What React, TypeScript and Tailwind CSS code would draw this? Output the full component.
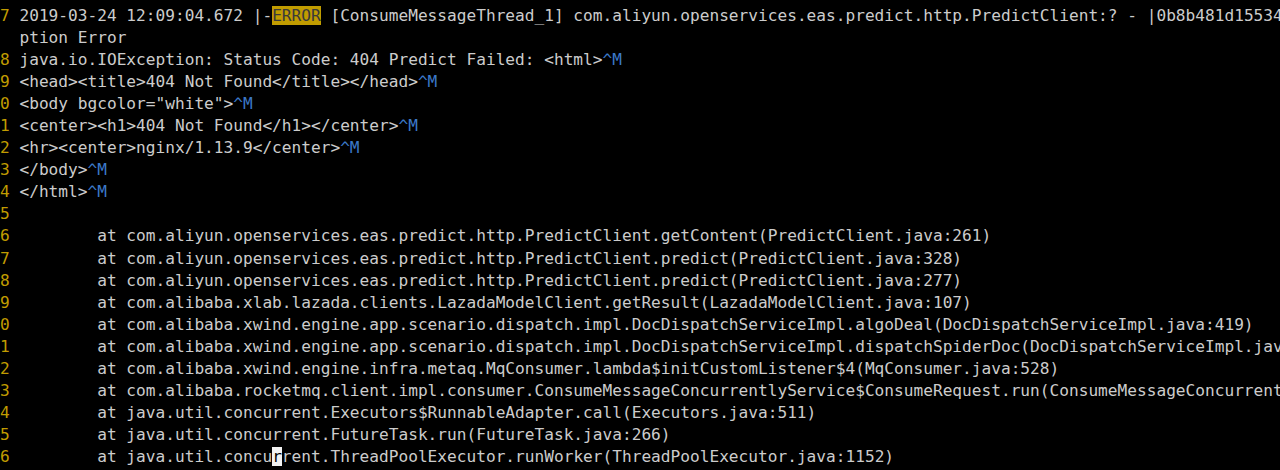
import React from 'react'

type Line = { n?: string; text?: string; cr?: boolean; node?: React.ReactNode }

const T = '        '

const lines: Line[] = [
  {
    n: '17',
    node: (
      <>
        2019-03-24 12:09:04.672 |-
        <span className="bg-[#c19c00] text-[#3a3a3a]">ERROR</span> [ConsumeMessageThread_1]
        com.aliyun.openservices.eas.predict.http.PredictClient:? - |0b8b481d15534628371461005e4f9a|Predict Exce
      </>
    ),
  },
  { text: 'ption Error' },
  { n: '18', text: 'java.io.IOException: Status Code: 404 Predict Failed: <html>', cr: true },
  { n: '19', text: '<head><title>404 Not Found</title></head>', cr: true },
  { n: '20', text: '<body bgcolor="white">', cr: true },
  { n: '21', text: '<center><h1>404 Not Found</h1></center>', cr: true },
  { n: '22', text: '<hr><center>nginx/1.13.9</center>', cr: true },
  { n: '23', text: '</body>', cr: true },
  { n: '24', text: '</html>', cr: true },
  { n: '25', text: '' },
  { n: '26', text: T + 'at com.aliyun.openservices.eas.predict.http.PredictClient.getContent(PredictClient.java:261)' },
  { n: '27', text: T + 'at com.aliyun.openservices.eas.predict.http.PredictClient.predict(PredictClient.java:328)' },
  { n: '28', text: T + 'at com.aliyun.openservices.eas.predict.http.PredictClient.predict(PredictClient.java:277)' },
  { n: '29', text: T + 'at com.alibaba.xlab.lazada.clients.LazadaModelClient.getResult(LazadaModelClient.java:107)' },
  { n: '30', text: T + 'at com.alibaba.xwind.engine.app.scenario.dispatch.impl.DocDispatchServiceImpl.algoDeal(DocDispatchServiceImpl.java:419)' },
  { n: '31', text: T + 'at com.alibaba.xwind.engine.app.scenario.dispatch.impl.DocDispatchServiceImpl.dispatchSpiderDoc(DocDispatchServiceImpl.java:251)' },
  { n: '32', text: T + 'at com.alibaba.xwind.engine.infra.metaq.MqConsumer.lambda$initCustomListener$4(MqConsumer.java:528)' },
  { n: '33', text: T + 'at com.alibaba.rocketmq.client.impl.consumer.ConsumeMessageConcurrentlyService$ConsumeRequest.run(ConsumeMessageConcurrentlyService.java:417)' },
  { n: '34', text: T + 'at java.util.concurrent.Executors$RunnableAdapter.call(Executors.java:511)' },
  { n: '35', text: T + 'at java.util.concurrent.FutureTask.run(FutureTask.java:266)' },
  {
    n: '36',
    node: (
      <>
        {T}at java.util.concu<span className="bg-[#f2f2f2] text-black">r</span>rent.ThreadPoolExecutor.runWorker(ThreadPoolExecutor.java:1152)
      </>
    ),
  },
]

export default function App() {
  return (
    <div className="h-[470px] w-[1280px] overflow-hidden bg-black pt-[5px] font-['DejaVu_Sans_Mono',monospace] text-[16.15px] leading-[22.05px] text-[#cccccc]">
      <div className="-ml-[9.7px]">
        {lines.map((line, i) => (
          <div key={i} className="h-[22.05px] whitespace-pre">
            <span className="text-[#c19c00]">{(line.n ?? '').padStart(2, ' ')} </span>
            {line.node ?? line.text}
            {line.cr && <span className="text-[#3b78c8]">^M</span>}
          </div>
        ))}
      </div>
    </div>
  )
}
